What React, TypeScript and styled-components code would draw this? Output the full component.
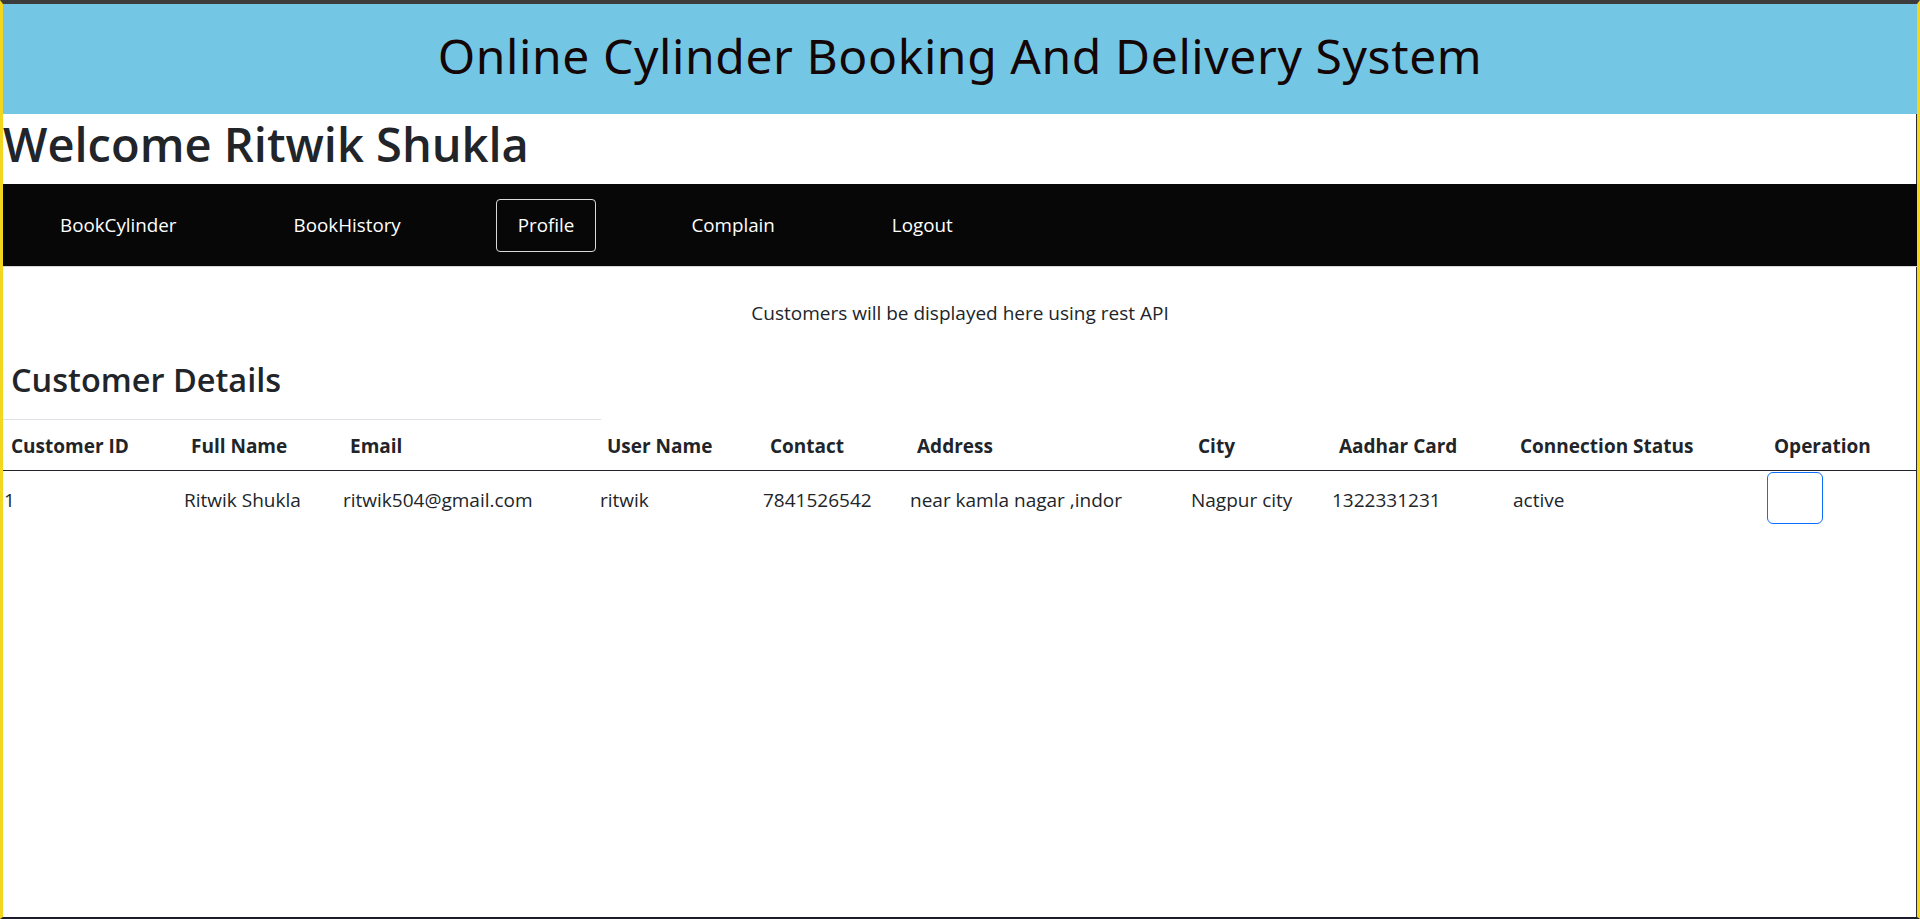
import React from "react";
import styled, { createGlobalStyle } from "styled-components";

const Global = createGlobalStyle`
  html, body { margin: 0; padding: 0; background: #ffffff; }
  body { font-family: "Open Sans", "Noto Sans", sans-serif; color: #212529; }
  * { box-sizing: border-box; }
`;

const Frame = styled.div`
  height: 919px;
  border-top: 4px solid #3c3c3c;
  border-bottom: 2px solid #1c1c2c;
  border-left: 3px solid #f2d61f;
  border-right: 3px solid #f2d61f;
  box-shadow: inset -1px 0 0 #2a2a2a;
  overflow: hidden;
  display: flex;
  flex-direction: column;
`;

const Banner = styled.header`
  height: 110px;
  background: #74c7e4;
  display: flex;
  align-items: center;
  justify-content: center;
`;

const BannerTitle = styled.div`
  font-family: "Comic Sans MS", "Noto Sans", sans-serif;
  font-size: 48px;
  color: #140606;
  letter-spacing: 0.6px;
  padding-bottom: 8px;
`;

const Welcome = styled.h1`
  margin: 0 0 10px 0;
  font-size: 47px;
  line-height: 60px;
  font-weight: 600;
  color: #212529;
`;

const Nav = styled.nav`
  height: 83px;
  background: #070707;
  border-bottom: 1px solid #d8d8d8;
  display: flex;
  align-items: center;
  gap: 73px;
  padding-left: 35px;
`;

const NavLink = styled.a<{ $active?: boolean }>`
  display: flex;
  align-items: center;
  height: 53px;
  padding: 0 21px;
  color: #ffffff;
  font-size: 18.8px;
  text-decoration: none;
  border: 1px solid ${(p) => (p.$active ? "#d9d9d9" : "transparent")};
  border-radius: 4px;
`;

const Info = styled.p`
  margin: 34px 0 0 0;
  line-height: 24px;
  font-size: 19px;
  text-align: center;
  color: #212529;
`;

const SectionTitle = styled.h2`
  margin: 31px 0 0 0;
  padding-left: 8px;
  font-size: 32.5px;
  line-height: 48px;
  font-weight: 600;
  color: #212529;
`;

const Rule = styled.div`
  margin-top: 15px;
  width: 598px;
  height: 1px;
  background: #dee2e6;
`;

const Table = styled.table`
  width: 100%;
  table-layout: fixed;
  border-collapse: collapse;
`;

const Th = styled.th`
  height: 50px;
  padding: 3px 0 0 8px;
  text-align: left;
  font-size: 19px;
  font-weight: 700;
  color: #212529;
  border-bottom: 1px solid #212529;
  white-space: nowrap;
  vertical-align: middle;
`;

const Td = styled.td`
  padding: 1px 0 4px 1px;
  font-size: 19px;
  color: #212529;
  white-space: nowrap;
  vertical-align: middle;
`;

const OpButton = styled.button`
  width: 56px;
  height: 52px;
  background: #ffffff;
  border: 1px solid #0d6efd;
  border-radius: 6px;
  padding: 0;
`;

const columns = [
  { label: "Customer ID", width: 180 },
  { label: "Full Name", width: 159 },
  { label: "Email", width: 257 },
  { label: "User Name", width: 163 },
  { label: "Contact", width: 147 },
  { label: "Address", width: 281 },
  { label: "City", width: 141 },
  { label: "Aadhar Card", width: 181 },
  { label: "Connection Status", width: 254 },
  { label: "Operation", width: 151 },
];

const customers = [
  {
    id: "1",
    name: "Ritwik Shukla",
    email: "ritwik504@gmail.com",
    user: "ritwik",
    contact: "7841526542",
    address: "near kamla nagar ,indor",
    city: "Nagpur city",
    aadhar: "1322331231",
    status: "active",
  },
];

const navItems = ["BookCylinder", "BookHistory", "Profile", "Complain", "Logout"];

export default function App() {
  return (
    <>
      <Global />
      <Frame>
        <Banner>
          <BannerTitle>Online Cylinder Booking And Delivery System</BannerTitle>
        </Banner>
        <Welcome>Welcome Ritwik Shukla</Welcome>
        <Nav>
          {navItems.map((n) => (
            <NavLink key={n} href="#" $active={n === "Profile"}>
              {n}
            </NavLink>
          ))}
        </Nav>
        <Info>Customers will be displayed here using rest API</Info>
        <SectionTitle>Customer Details</SectionTitle>
        <Rule />
        <Table>
          <colgroup>
            {columns.map((c) => (
              <col key={c.label} style={{ width: c.width }} />
            ))}
          </colgroup>
          <thead>
            <tr>
              {columns.map((c) => (
                <Th key={c.label}>{c.label}</Th>
              ))}
            </tr>
          </thead>
          <tbody>
            {customers.map((c) => (
              <tr key={c.id}>
                <Td>{c.id}</Td>
                <Td>{c.name}</Td>
                <Td>{c.email}</Td>
                <Td>{c.user}</Td>
                <Td>{c.contact}</Td>
                <Td>{c.address}</Td>
                <Td>{c.city}</Td>
                <Td>{c.aadhar}</Td>
                <Td>{c.status}</Td>
                <Td>
                  <OpButton aria-label="operation" />
                </Td>
              </tr>
            ))}
          </tbody>
        </Table>
      </Frame>
    </>
  );
}
